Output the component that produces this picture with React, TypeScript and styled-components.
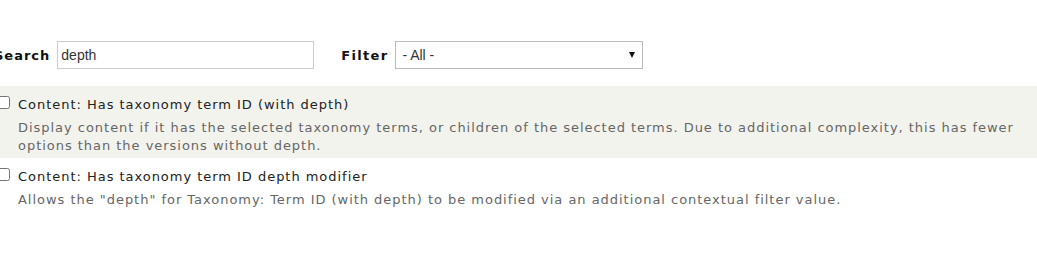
import React from "react";
import styled, { createGlobalStyle } from "styled-components";

const Global = createGlobalStyle`
  html, body { margin: 0; padding: 0; background: #fff; }
  body { font-family: "DejaVu Sans", Verdana, sans-serif; font-size: 13px; color: #222; overflow: hidden; }
`;

const Page = styled.div`
  width: 1043px;
  margin-left: -6px;
  padding-top: 41px;
`;

const Toolbar = styled.div`
  display: flex;
  align-items: center;
  height: 28px;
`;

const Field = styled.div<{ $mr?: number; $gap: number }>`
  display: flex;
  align-items: center;
  gap: ${(p) => p.$gap}px;
  margin-right: ${(p) => p.$mr ?? 0}px;
`;

const Label = styled.label<{ $ls: number }>`
  font-weight: bold;
  font-size: 13px;
  letter-spacing: ${(p) => p.$ls}px;
  color: #111;
`;

const TextInput = styled.input`
  box-sizing: border-box;
  width: 257px;
  height: 28px;
  border: 1px solid #ccc;
  padding: 0 3px;
  font-family: Arial, "Liberation Sans", sans-serif;
  font-size: 14px;
  color: #333;
  outline: none;
`;

const SelectBox = styled.div`
  box-sizing: border-box;
  width: 248px;
  height: 28px;
  border: 1px solid #bbb;
  display: flex;
  align-items: center;
  justify-content: space-between;
  padding: 0 7px 0 6px;
  font-family: Arial, "Liberation Sans", sans-serif;
  font-size: 14px;
  color: #333;
`;

const Arrow = styled.span`
  width: 0;
  height: 0;
  border-left: 3.5px solid transparent;
  border-right: 3.5px solid transparent;
  border-top: 6px solid #111;
`;

const List = styled.div`
  margin-top: 17px;
`;

const Option = styled.div<{ $odd?: boolean }>`
  display: flex;
  align-items: flex-start;
  gap: 8px;
  padding: 10px 0 3px 3px;
  background: ${(p) => (p.$odd ? "#f3f3ee" : "#fff")};
`;

const Check = styled.input`
  margin: 0;
  width: 13px;
  height: 13px;
`;

const Body = styled.div`
  display: flex;
  flex-direction: column;
  letter-spacing: 0.97px;
`;

const Title = styled.div`
  line-height: 18px;
  color: #222;
`;

const Desc = styled.div`
  margin-top: 5px;
  line-height: 18px;
  color: #666;
  padding-right: 20px;
`;

export default function App() {
  return (
    <>
      <Global />
      <Page>
        <Toolbar>
          <Field $mr={27} $gap={7}>
            <Label htmlFor="s" $ls={1}>Search</Label>
            <TextInput id="s" defaultValue="depth" />
          </Field>
          <Field $gap={7}>
            <Label $ls={1.3}>Filter</Label>
            <SelectBox>
              <span>- All -</span>
              <Arrow />
            </SelectBox>
          </Field>
        </Toolbar>
        <List>
          <Option $odd>
            <Check type="checkbox" />
            <Body>
              <Title>Content: Has taxonomy term ID (with depth)</Title>
              <Desc>
                Display content if it has the selected taxonomy terms, or children of the selected terms. Due to additional complexity, this has fewer options than the versions without depth.
              </Desc>
            </Body>
          </Option>
          <Option>
            <Check type="checkbox" />
            <Body>
              <Title>Content: Has taxonomy term ID depth modifier</Title>
              <Desc>
                Allows the "depth" for Taxonomy: Term ID (with depth) to be modified via an additional contextual filter value.
              </Desc>
            </Body>
          </Option>
        </List>
      </Page>
    </>
  );
}
